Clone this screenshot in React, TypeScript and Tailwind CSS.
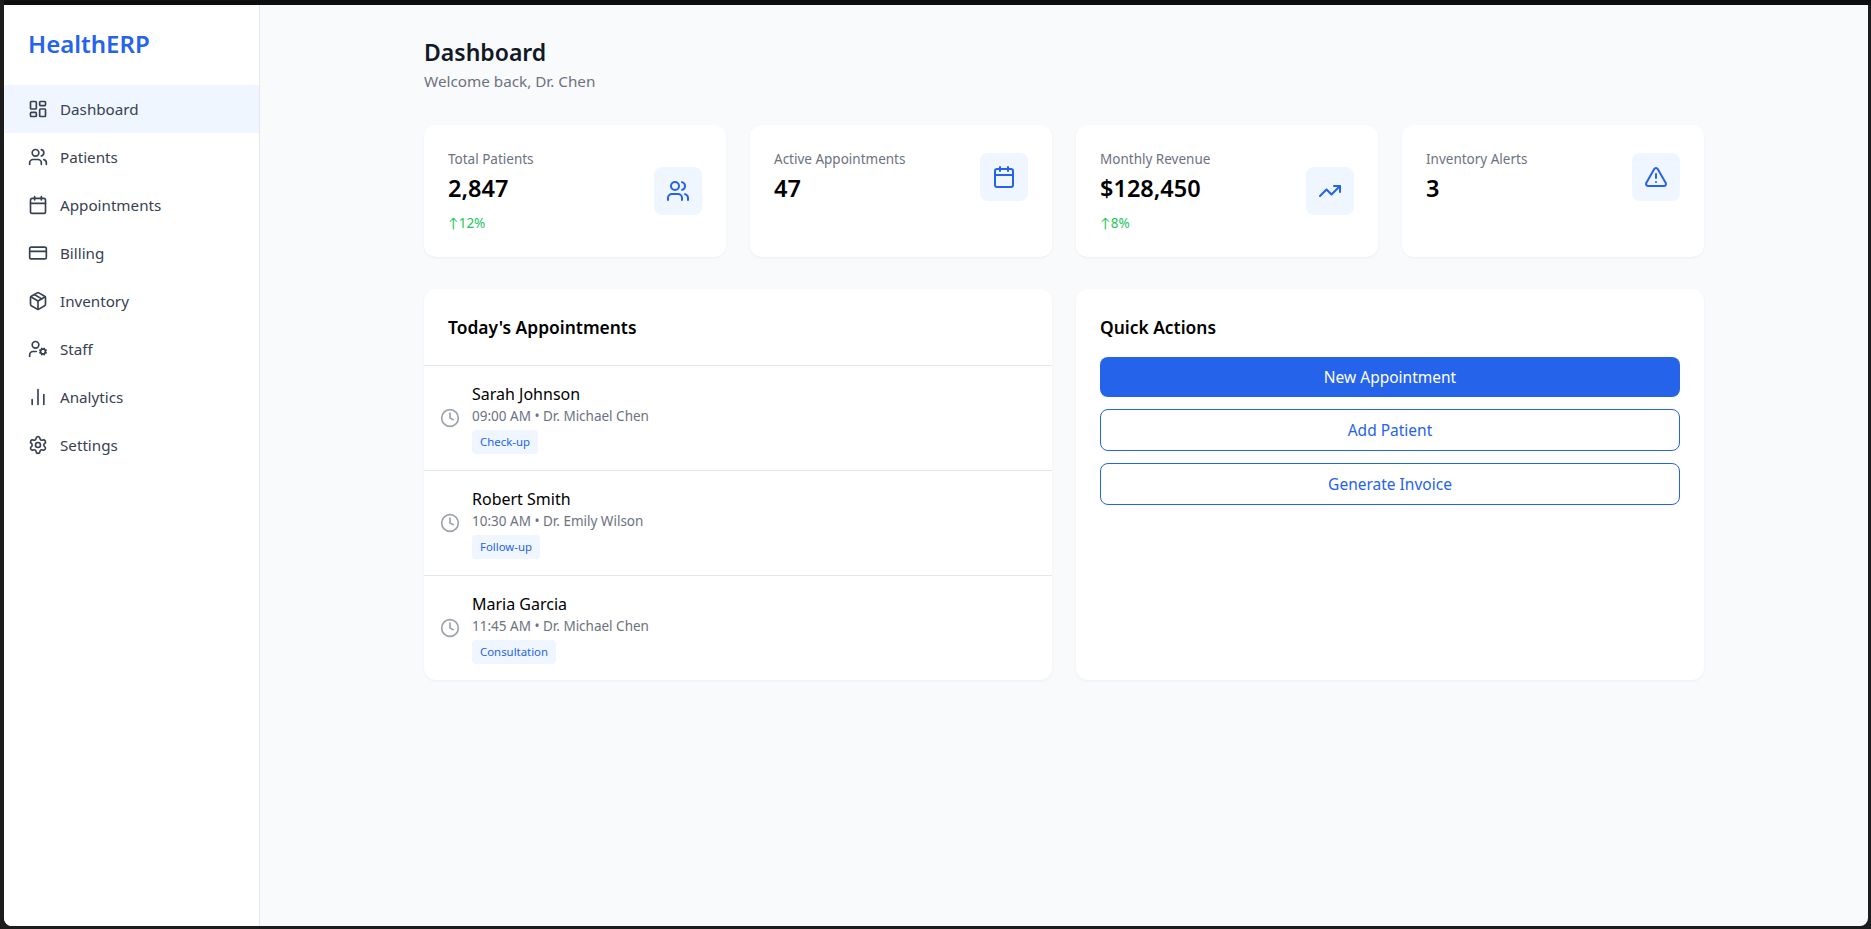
import { LayoutDashboard, Users, Calendar, CreditCard, Package, UserCog, ChartNoAxesColumn, Settings, TrendingUp, TriangleAlert, Clock } from "lucide-react";

const nav = [
  { label: "Dashboard", icon: LayoutDashboard, active: true },
  { label: "Patients", icon: Users },
  { label: "Appointments", icon: Calendar },
  { label: "Billing", icon: CreditCard },
  { label: "Inventory", icon: Package },
  { label: "Staff", icon: UserCog },
  { label: "Analytics", icon: ChartNoAxesColumn },
  { label: "Settings", icon: Settings },
];

const stats = [
  { label: "Total Patients", value: "2,847", trend: "12%", icon: Users },
  { label: "Active Appointments", value: "47", icon: Calendar },
  { label: "Monthly Revenue", value: "$128,450", trend: "8%", icon: TrendingUp },
  { label: "Inventory Alerts", value: "3", icon: TriangleAlert },
];

const appts = [
  { name: "Sarah Johnson", meta: "09:00 AM • Dr. Michael Chen", tag: "Check-up" },
  { name: "Robert Smith", meta: "10:30 AM • Dr. Emily Wilson", tag: "Follow-up" },
  { name: "Maria Garcia", meta: "11:45 AM • Dr. Michael Chen", tag: "Consultation" },
];

export default function App() {
  return (
    <div className="h-screen w-screen overflow-hidden bg-[#1c1c1c] font-['Noto_Sans',sans-serif]">
      <div className="ml-[4px] h-[5px] bg-[#0e0e0e]" />
      <div className="ml-[4px] mr-[3px] flex h-[921px] overflow-hidden rounded-b-lg bg-[#f9fafb]">
        <aside className="w-[256px] shrink-0 border-r border-[#e5e7eb] bg-white">
          <div className="p-6">
            <div className="pb-[2px] text-[24px]/[30px] font-semibold text-[#2563eb]">HealthERP</div>
          </div>
          <nav>
            {nav.map((n) => (
              <div key={n.label} className={`flex items-center gap-3 px-6 py-3 text-[15.2px]/[24px] text-[#374151] ${n.active ? "bg-[#eff6ff]" : ""}`}>
                <n.icon className="h-5 w-5" />
                <span>{n.label}</span>
              </div>
            ))}
          </nav>
        </aside>
        <main className="flex-1 p-8">
          <div className="mx-auto w-[1280px]">
            <div className="mb-8">
              <h1 className="pb-[2px] text-[23px]/[30px] font-semibold text-[#111827]">Dashboard</h1>
              <p className="text-[15.25px]/[24px] text-[#6b7280]">Welcome back, Dr. Chen</p>
            </div>
            <div className="mb-8 grid grid-cols-4 gap-6">
              {stats.map((s) => (
                <div key={s.label} className="rounded-xl bg-white p-6 shadow-[0_1px_3px_rgba(0,0,0,0.05)]">
                  <div className="flex items-center justify-between">
                    <div>
                      <p className="text-[13.5px]/[20px] text-[#6b7280]">{s.label}</p>
                      <p className="mt-1 pb-[2px] text-[23.5px]/[30px] font-semibold text-black">{s.value}</p>
                      {s.trend && (
                        <p className="mt-2 text-[13.5px]/[20px] text-[#22c55e]">
                          <span className="-mr-[3px] font-['Lato',sans-serif]">↑</span> {s.trend}
                        </p>
                      )}
                    </div>
                    <div className="rounded-lg bg-[#eff6ff] p-3">
                      <s.icon className="h-6 w-6 text-[#2563eb]" />
                    </div>
                  </div>
                </div>
              ))}
            </div>
            <div className="grid grid-cols-2 gap-6">
              <div className="rounded-xl bg-white shadow-[0_1px_3px_rgba(0,0,0,0.05)]">
                <div className="border-b border-[#e5e7eb] p-6">
                  <h2 className="text-[17.4px]/[28px] font-semibold text-black">Today's Appointments</h2>
                </div>
                <div className="divide-y divide-[#e5e7eb]">
                  {appts.map((a) => (
                    <div key={a.name} className="flex items-center gap-3 p-4">
                      <Clock className="h-5 w-5 text-[#9ca3af]" />
                      <div>
                        <p className="text-base text-black">{a.name}</p>
                        <p className="text-[13.5px]/[20px] text-[#6b7280]">{a.meta}</p>
                        <span className="mt-1 inline-block rounded bg-[#eff6ff] px-2 py-1 text-[11.4px]/[16px] text-[#2563eb]">{a.tag}</span>
                      </div>
                    </div>
                  ))}
                </div>
              </div>
              <div className="rounded-xl bg-white p-6 shadow-[0_1px_3px_rgba(0,0,0,0.05)]">
                <h2 className="mb-4 text-[17.4px]/[28px] font-semibold text-black">Quick Actions</h2>
                <div className="flex flex-col gap-3">
                  <button className="rounded-lg bg-[#2563eb] px-4 py-2 text-[15.5px]/[24px] text-white">New Appointment</button>
                  <button className="rounded-lg border border-[#2563eb] px-4 py-2 text-[15.5px]/[24px] text-[#2563eb]">Add Patient</button>
                  <button className="rounded-lg border border-[#2563eb] px-4 py-2 text-[15.5px]/[24px] text-[#2563eb]">Generate Invoice</button>
                </div>
              </div>
            </div>
          </div>
        </main>
      </div>
    </div>
  );
}
